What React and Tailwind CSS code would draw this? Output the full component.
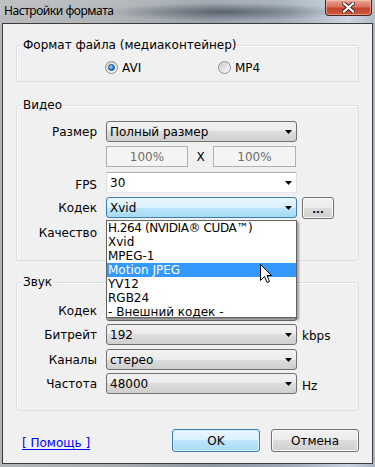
import React from "react";

const FONT = "font-['DejaVu_Sans',sans-serif]";

const Arrow = () => (
  <svg width="7" height="4" viewBox="0 0 7 4" className="shrink-0">
    <path d="M0 0h7L3.5 4z" fill="#000" />
  </svg>
);

const comboStyles = {
  button:
    "rounded-[3px] border border-[#707070] bg-[linear-gradient(#f2f2f2_0%,#ebebeb_50%,#dddddd_50%,#cfcfcf_100%)]",
  open: "rounded-[3px] border border-[#3c7fb1] bg-[linear-gradient(#eaf6fd_0%,#d9f0fc_50%,#bee6fd_50%,#a7d9f5_100%)]",
  edit: "border border-[#abadb3] border-x-[#dbdfe6] border-b-[#e3e9ef] bg-white",
};

const Combo = ({ value, variant = "button" }) => (
  <div
    className={`flex h-[21px] w-[191px] items-center justify-between pl-[3px] pr-[4px] ${comboStyles[variant]}`}
  >
    <span className="leading-none">{value}</span>
    <Arrow />
  </div>
);

const Row = ({ label, children, labelClass = "" }) => (
  <div className="flex h-[21px] items-center">
    <div className={`w-[80px] shrink-0 text-right ${labelClass}`}>{label}</div>
    <div className="ml-[9px] flex items-center">{children}</div>
  </div>
);

const Group = ({ title, className, children }) => (
  <div
    className={`relative mx-[13px] rounded-[3px] border border-[#d5dfe5] shadow-[inset_1px_1px_0_#ffffff] ${className}`}
  >
    <span className="absolute -top-[8px] left-[5px] bg-[#f0f0f0] px-[1px] leading-[14px]">{title}</span>
    {children}
  </div>
);

const Radio = ({ checked, label }) => (
  <div className="flex items-center">
    <div className="flex h-[13px] w-[13px] items-center justify-center rounded-full border border-[#8e8f8f] bg-[linear-gradient(135deg,#d0d0d0,#fbfbfb)]">
      {checked ? (
        <div className="h-[7px] w-[7px] rounded-full border border-[#1c4c84] bg-[radial-gradient(circle_at_35%_35%,#b6e3ff,#2d84d2_55%,#0d4a96)]" />
      ) : (
        <div className="h-[9px] w-[9px] rounded-full bg-[linear-gradient(135deg,#cfcfcf,#f6f6f6)]" />
      )}
    </div>
    <span className="ml-[4px]">{label}</span>
  </div>
);

const codecs = [
  "H.264 (NVIDIA® CUDA™)",
  "Xvid",
  "MPEG-1",
  "Motion JPEG",
  "YV12",
  "RGB24",
  "- Внешний кодек -",
];

const Cursor = () => (
  <svg width="12" height="20" viewBox="0 0 12 20" className="absolute left-[153px] top-[43px]">
    <path
      d="M0.5 0.5 L0.5 16.5 L4.5 12.5 L7 18.5 L9.5 17.5 L7 11.5 L11.5 11.5 Z"
      fill="#fff"
      stroke="#000"
      strokeWidth="1"
      strokeLinejoin="miter"
    />
  </svg>
);

const Button = ({ children, primary, className = "" }) => (
  <div
    className={`flex items-center justify-center rounded-[3px] border ${
      primary
        ? "border-[#3c7fb1] bg-[linear-gradient(#eaf6fd_0%,#d9f0fc_50%,#bee6fd_50%,#a7d9f5_100%)] shadow-[inset_0_0_0_1px_#d6f0fd]"
        : "border-[#707070] bg-[linear-gradient(#f2f2f2_0%,#ebebeb_50%,#dddddd_50%,#cfcfcf_100%)] shadow-[inset_0_0_0_1px_#fbfbfb]"
    } ${className}`}
  >
    {children}
  </div>
);

export default function App() {
  return (
    <div
      className={`flex h-[467px] w-[375px] flex-col px-[2px] pb-[3px] text-[12px] text-black ${FONT} bg-[linear-gradient(180deg,rgba(255,255,255,0.18),rgba(255,255,255,0)_40px),linear-gradient(90deg,#b2b5b7_0%,#a8adb1_30%,#8e98a2_56%,#9ba7b3_76%,#c6d1dc_93%,#a9b5c1_100%)]`}
    >
      {/* Title bar */}
      <div className="-mx-[2px] flex h-[23px] shrink-0 items-start justify-between bg-[radial-gradient(ellipse_120px_9px_at_60%_12px,rgba(45,55,66,0.6),rgba(45,55,66,0))] px-[2px]">
        <span className="mt-[4px] ml-[2px] font-['Noto_Sans',sans-serif] text-[12px] leading-[14px] tracking-[-0.45px]">
          Настройки формата
        </span>
        <div className="mr-[1px] flex h-[16px] w-[47px] items-center justify-center rounded-b-[4px] border border-t-0 border-[#4a2520] bg-[linear-gradient(#e9a797_0%,#d7705c_45%,#c6432d_55%,#cf5a3f_100%)] shadow-[inset_0_0_0_1px_rgba(255,210,200,0.5)]">
          <svg width="13" height="11" viewBox="0 0 13 11">
            <path d="M2 1.5 L11 9.5 M11 1.5 L2 9.5" stroke="#3a2a28" strokeWidth="4" strokeLinecap="square" />
            <path d="M2 1.5 L11 9.5 M11 1.5 L2 9.5" stroke="#fff" strokeWidth="2.2" strokeLinecap="square" />
          </svg>
        </div>
      </div>

      {/* Client area */}
      <div className="flex flex-1 flex-col border border-[#3c3c3c] bg-[#f0f0f0]">
        <Group title="Формат файла (медиаконтейнер)" className="mt-[21px] h-[37px]">
          <div className="flex h-full items-center pl-[88px] pt-[8px]">
            <div className="w-[113px]">
              <Radio checked label="AVI" />
            </div>
            <Radio label="MP4" />
          </div>
        </Group>

        <Group title="Видео" className="mt-[23px] h-[156px]">
          <div className="flex flex-col pt-[15px]">
            <Row label="Размер">
              <Combo value="Полный размер" />
            </Row>
            <div className="mt-[4px]">
              <Row label="">
                <div className="flex h-[21px] w-[82px] items-center justify-center border border-[#adb2b5] bg-[#f4f4f4] text-[#6d6d6d]">
                  100%
                </div>
                <span className="w-[25px] text-center">X</span>
                <div className="flex h-[21px] w-[83px] items-center justify-center border border-[#adb2b5] bg-[#f4f4f4] text-[#6d6d6d]">
                  100%
                </div>
              </Row>
            </div>
            <div className="mt-[5px]">
              <Row label="FPS" labelClass="pt-[5px]">
                <Combo value="30" variant="edit" />
              </Row>
            </div>
            <div className="relative z-10 mt-[4px]">
              <Row label="Кодек">
                <div className="relative">
                  <Combo value="Xvid" variant="open" />
                  <div className="absolute left-0 top-[23px] h-[98px] w-[191px] border border-[#646464] bg-white shadow-[2px_2px_2px_rgba(0,0,0,0.35)]">
                    {codecs.map((c) => (
                      <div
                        key={c}
                        className={`h-[14px] pl-[1px] leading-[14px] ${
                          c === "Motion JPEG" ? "bg-[#3399ff] text-white" : ""
                        } ${c.startsWith("H.264") ? "tracking-[-0.4px]" : ""}`}
                      >
                        {c}
                      </div>
                    ))}
                    <Cursor />
                  </div>
                </div>
                <Button className="ml-[5px] h-[22px] w-[32px] text-[10px] font-bold leading-none">
                  <span className="mt-[5px]">...</span>
                </Button>
              </Row>
            </div>
            <div className="mt-[4px]">
              <Row label="Качество">
                <div />
              </Row>
            </div>
          </div>
        </Group>

        <Group title="Звук" className="mt-[21px] h-[129px]">
          <div className="flex flex-col pt-[17px]">
            <Row label="Кодек">
              <Combo value="" />
            </Row>
            <div className="mt-[3px]">
              <Row label="Битрейт">
                <Combo value="192" />
                <span className="ml-[5px] pt-[3px]">kbps</span>
              </Row>
            </div>
            <div className="mt-[4px]">
              <Row label="Каналы">
                <Combo value="стерео" />
              </Row>
            </div>
            <div className="mt-[3px]">
              <Row label="Частота">
                <Combo value="48000" />
                <span className="ml-[5px] pt-[4px]">Hz</span>
              </Row>
            </div>
          </div>
        </Group>

        <div className="mt-[18px] flex h-[23px] items-center pl-[19px] pr-[13px]">
          <a className="pt-[5px] text-[#0000ff] underline decoration-1 underline-offset-2">[ Помощь ]</a>
          <div className="ml-auto flex gap-[11px]">
            <Button primary className="h-[23px] w-[88px]">
              OK
            </Button>
            <Button className="h-[23px] w-[88px]">Отмена</Button>
          </div>
        </div>
      </div>
    </div>
  );
}
